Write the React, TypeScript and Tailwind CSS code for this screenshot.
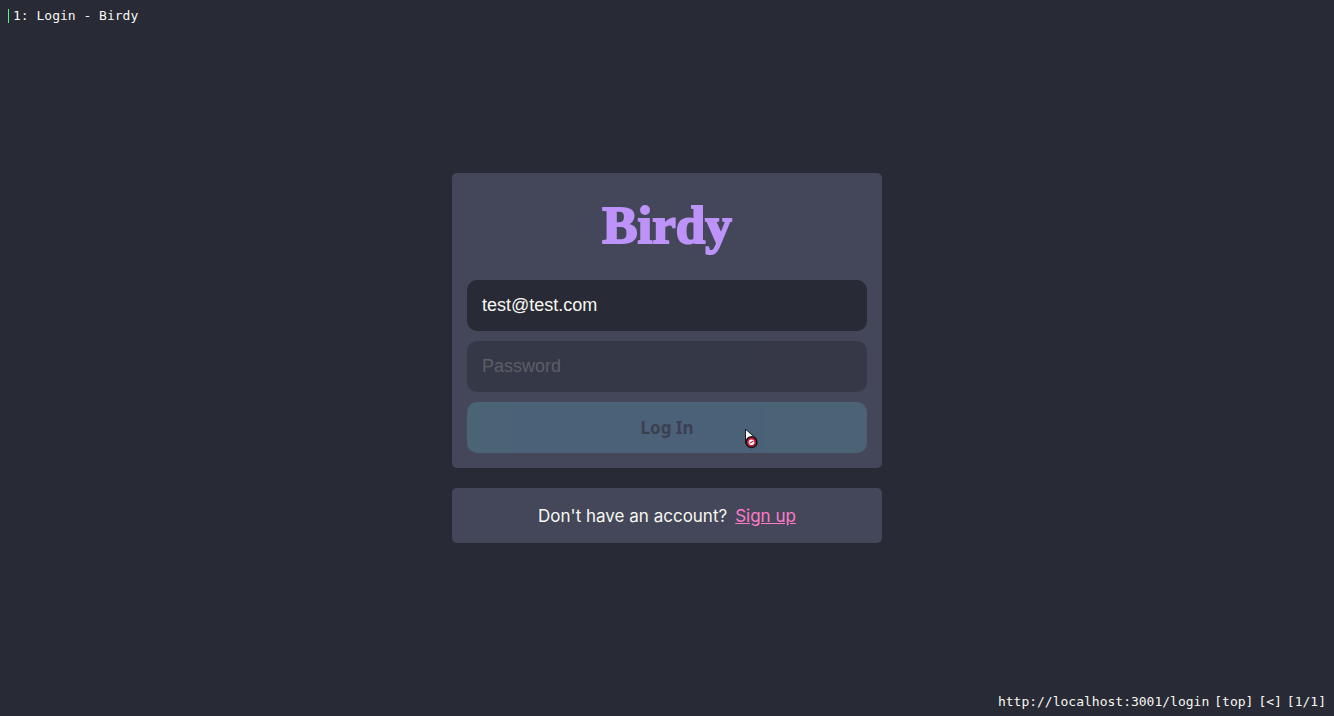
import { useState } from "react";

function BlockedCursor() {
  return (
    <svg
      className="pointer-events-none absolute top-[26px] left-[69%] ml-px"
      width="14"
      height="22"
      viewBox="0 0 14 22"
      aria-hidden="true"
    >
      <path
        d="M1.5 1.2 L1.5 15 L6 15 L12 10.5 Z"
        fill="#ffffff"
        stroke="#15171d"
        strokeWidth="1"
        strokeLinejoin="round"
      />
      <circle cx="7.5" cy="14.2" r="5.4" fill="#c01c32" stroke="#14131a" strokeWidth="1.5" />
      <circle cx="7.5" cy="14.2" r="2.8" fill="#ffffff" />
      <path d="M5.6 15.4 L9.4 13" stroke="#c01c32" strokeWidth="1.1" />
    </svg>
  );
}

const fieldClass =
  "h-[51px] w-full rounded-[10px] bg-[#282a36] px-[15px] font-['Liberation_Sans',Arial,sans-serif] text-[18px] leading-6 text-[#f8f8f2] outline-none placeholder:text-[#757575]";

export default function App() {
  const [email, setEmail] = useState("test@test.com");
  const [password, setPassword] = useState("");

  return (
    <div className="flex min-h-screen flex-col bg-[#282a36] text-[#f8f8f2]">
      <header className="flex h-8 items-center px-2 font-['DejaVu_Sans_Mono',monospace] text-[13px] leading-4">
        <span className="h-[14px] w-px bg-[#50fa7b]" />
        <span className="ml-1">1: Login - Birdy</span>
      </header>

      <main className="flex flex-1 flex-col items-center justify-center gap-5">
        <form
          className="flex w-full max-w-[430px] flex-col gap-[10px] rounded-[5px] bg-[#44475a] p-[15px]"
          onSubmit={(event) => event.preventDefault()}
        >
          <h1 className="mb-2 text-center font-['Liberation_Serif',serif] text-[53px] leading-[74px] font-bold text-[#bd93f9] [-webkit-text-stroke:2px_#bd93f9]">
            Birdy
          </h1>
          <input
            type="email"
            aria-label="Email"
            placeholder="Email"
            value={email}
            onChange={(event) => setEmail(event.target.value)}
            className={fieldClass}
          />
          <div className="opacity-50">
            <input
              type="password"
              aria-label="Password"
              placeholder="Password"
              value={password}
              onChange={(event) => setPassword(event.target.value)}
              className={`${fieldClass} block`}
            />
          </div>
          <div className="relative">
            <button
              type="submit"
              disabled={password === ""}
              className="block h-[51px] w-full cursor-not-allowed rounded-[10px] bg-[linear-gradient(90deg,#4a6475_10%,#4b6178_11%,#4b6178_74%,#4a6475_75%)] font-['Noto_Sans',sans-serif] text-[17px] leading-6 font-bold text-[#3c3f52]"
            >
              Log In
            </button>
            <BlockedCursor />
          </div>
        </form>

        <p className="flex h-[55px] w-full max-w-[430px] items-center justify-center gap-2 rounded-[5px] bg-[#44475a] font-[Inter,sans-serif] text-[17px] leading-6">
          Don't have an account?
          <a href="/signup" className="text-[#ff79c6] underline">
            Sign up
          </a>
        </p>
      </main>

      <footer className="flex h-8 items-center justify-end gap-[5px] px-2 pt-1 font-['DejaVu_Sans_Mono',monospace] text-[13px] leading-4">
        <span>http://localhost:3001/login</span>
        <span>[top]</span>
        <span>[&lt;]</span>
        <span>[1/1]</span>
      </footer>
    </div>
  );
}
